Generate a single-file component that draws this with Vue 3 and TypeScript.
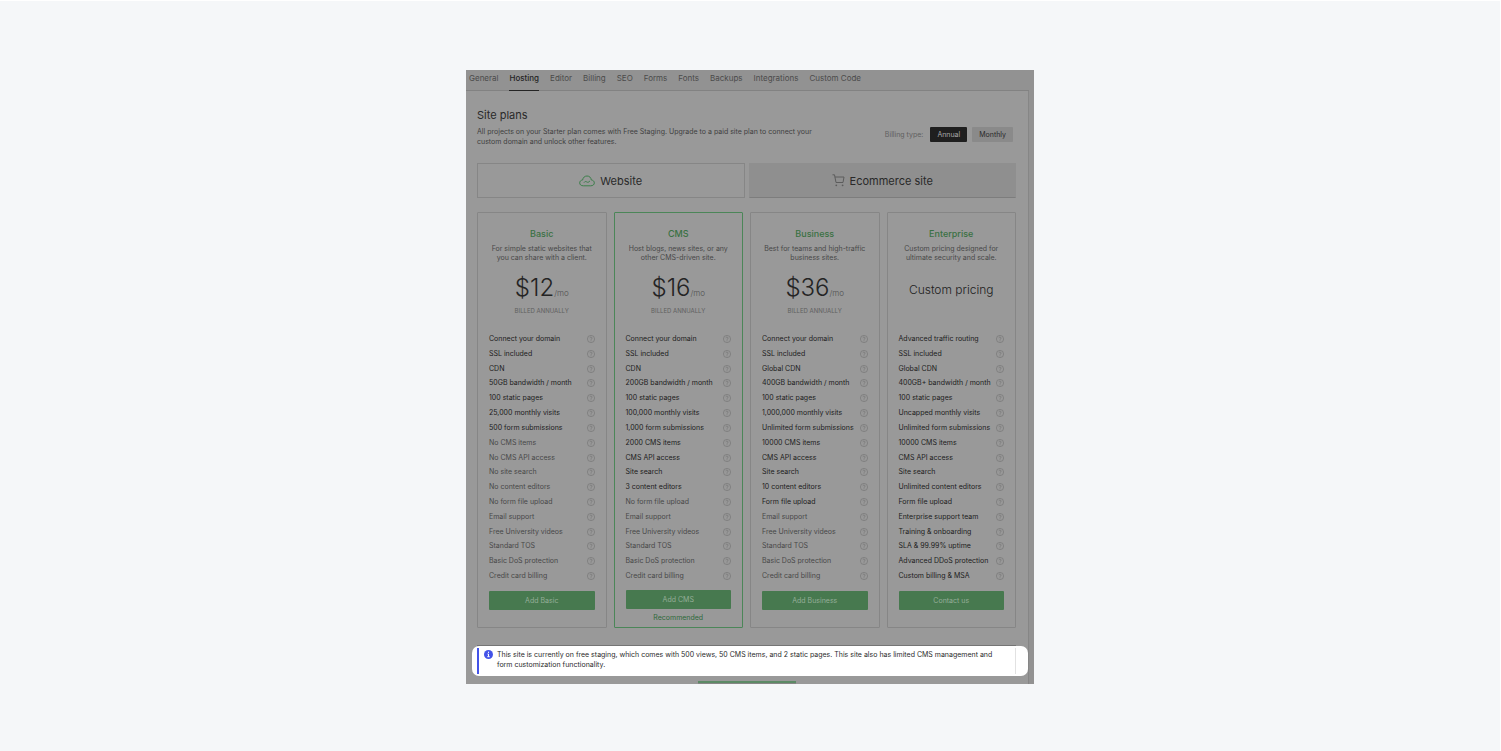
<script setup lang="ts">
import { ref } from 'vue'

interface Plan {
  name: string
  blurb: string[]
  price?: string
  features: string[]
  included: number
  action: string
  recommended?: boolean
}

const links = ['General', 'Hosting', 'Editor', 'Billing', 'SEO', 'Forms', 'Fonts', 'Backups', 'Integrations', 'Custom Code']
const billing = ref<'Annual' | 'Monthly'>('Annual')
const siteType = ref<'website' | 'ecommerce'>('website')

const standard = ['Email support', 'Free University videos', 'Standard TOS', 'Basic DoS protection', 'Credit card billing']

const plans: Plan[] = [
  {
    name: 'Basic',
    blurb: ['For simple static websites that', 'you can share with a client.'],
    price: '$12',
    features: ['Connect your domain', 'SSL included', 'CDN', '50GB bandwidth / month', '100 static pages', '25,000 monthly visits', '500 form submissions', 'No CMS items', 'No CMS API access', 'No site search', 'No content editors', 'No form file upload', ...standard],
    included: 7,
    action: 'Add Basic',
  },
  {
    name: 'CMS',
    blurb: ['Host blogs, news sites, or any', 'other CMS-driven site.'],
    price: '$16',
    features: ['Connect your domain', 'SSL included', 'CDN', '200GB bandwidth / month', '100 static pages', '100,000 monthly visits', '1,000 form submissions', '2000 CMS items', 'CMS API access', 'Site search', '3 content editors', 'No form file upload', ...standard],
    included: 11,
    action: 'Add CMS',
    recommended: true,
  },
  {
    name: 'Business',
    blurb: ['Best for teams and high-traffic', 'business sites.'],
    price: '$36',
    features: ['Connect your domain', 'SSL included', 'Global CDN', '400GB bandwidth / month', '100 static pages', '1,000,000 monthly visits', 'Unlimited form submissions', '10000 CMS items', 'CMS API access', 'Site search', '10 content editors', 'Form file upload', ...standard],
    included: 12,
    action: 'Add Business',
  },
  {
    name: 'Enterprise',
    blurb: ['Custom pricing designed for', 'ultimate security and scale.'],
    features: ['Advanced traffic routing', 'SSL included', 'Global CDN', '400GB+ bandwidth / month', '100 static pages', 'Uncapped monthly visits', 'Unlimited form submissions', '10000 CMS items', 'CMS API access', 'Site search', 'Unlimited content editors', 'Form file upload', 'Enterprise support team', 'Training & onboarding', 'SLA & 99.99% uptime', 'Advanced DDoS protection', 'Custom billing & MSA'],
    included: 17,
    action: 'Contact us',
  },
]
</script>

<template>
  <main class="frame">
    <nav class="nav">
      <a v-for="link in links" :key="link" href="#" :class="{ current: link === 'Hosting' }">{{ link }}</a>
    </nav>

    <div class="panel">
      <header class="intro">
        <div>
          <h1>Site plans</h1>
          <p>All projects on your Starter plan comes with Free Staging. Upgrade to a paid site plan to connect your<br>custom domain and unlock other features.</p>
        </div>
        <div class="billing" role="group" aria-labelledby="billing-label">
          <span id="billing-label">Billing type:</span>
          <button type="button" :class="{ on: billing === 'Annual' }" @click="billing = 'Annual'">Annual</button>
          <button type="button" :class="{ on: billing === 'Monthly' }" @click="billing = 'Monthly'">Monthly</button>
        </div>
      </header>

      <div class="tabs">
        <button type="button" :class="{ on: siteType === 'website' }" @click="siteType = 'website'">
          <svg class="cloud" width="16" height="12" viewBox="0 0 16 12" fill="none" stroke="currentColor" stroke-linecap="round" stroke-linejoin="round">
            <path d="M4 10.8C2 10.8.7 9.6.7 7.9.7 6.300 1.800 5.200 3.600 5 4 2.500 5.700 1 8 1c2.400 0 4 1.500 4.300 4 1.900.2 3 1.300 3 2.900 0 1.700-1.300 2.900-3.300 2.900Z" />
            <path d="M5.200 7.300c.7-1 1.600-1 2.500-.4.9.7 1.900.6 3-.7" />
          </svg>
          <span>Website</span>
        </button>
        <button type="button" :class="{ on: siteType === 'ecommerce' }" @click="siteType = 'ecommerce'">
          <svg width="13" height="13" viewBox="0 0 13 13" fill="none" stroke="currentColor">
            <path d="M.5.800H2.500L4 8.500H11L12 3H2.900" />
            <circle cx="4.300" cy="11.300" r=".9" fill="currentColor" stroke="none" />
            <circle cx="10.600" cy="11.300" r=".9" fill="currentColor" stroke="none" />
          </svg>
          <span>Ecommerce site</span>
        </button>
      </div>

      <div class="plans">
        <section v-for="plan in plans" :key="plan.name" class="plan" :class="{ recommended: plan.recommended }">
          <h2>{{ plan.name }}</h2>
          <p class="blurb">{{ plan.blurb[0] }}<br>{{ plan.blurb[1] }}</p>
          <div class="cost">
            <template v-if="plan.price">
              <p class="price">{{ plan.price }}<small>/mo</small></p>
              <p class="term">BILLED ANNUALLY</p>
            </template>
            <p v-else class="custom">Custom pricing</p>
          </div>
          <ul>
            <li v-for="(feature, i) in plan.features" :key="feature" :class="{ included: i < plan.included }">
              <span>{{ feature }}</span>
              <button type="button" class="help" :aria-label="'About ' + feature">
                <svg width="8" height="8" viewBox="0 0 8 8" fill="none" stroke="currentColor">
                  <circle cx="4" cy="4" r="3.600" stroke-width=".7" />
                  <path d="M2.900 3.200C2.900 1.700 5.100 1.800 5.100 3.100 5.100 3.900 4 3.900 4 4.800M4 5.400v.8" stroke-width=".8" />
                </svg>
              </button>
            </li>
          </ul>
          <button type="button" class="action">{{ plan.action }}</button>
          <p v-if="plan.recommended" class="tag">Recommended</p>
        </section>
      </div>

      <div class="rule"></div>
      <div class="notice">
        <div class="message">
          <svg width="9" height="9" viewBox="0 0 9 9">
            <circle cx="4.500" cy="4.500" r="4.500" fill="#4353e8" />
            <path d="M4.500 1.700v1.200M3.500 4h1v2.600M3.300 6.700h2.400" fill="none" stroke="#fff" />
          </svg>
          <p>This site is currently on free staging, which comes with 500 views, 50 CMS items, and 2 static pages. This site also has limited CMS management and<br>form customization functionality.</p>
        </div>
      </div>
      <div class="next"></div>
    </div>
  </main>
</template>

<style>
body {
  margin: 0;
  border: 0 solid #fff;
  border-width: 1px 1px 0 0;
  background: #f5f7f9;
}
</style>

<style scoped>
* {
  box-sizing: border-box;
}
h1, h2, p, ul {
  margin: 0;
  padding: 0;
  font-weight: 400;
}
button {
  margin: 0;
  padding: 0;
  border: 0;
  font: inherit;
  color: inherit;
  background: none;
  cursor: pointer;
}
.frame {
  max-width: 568px;
  margin: 69px auto 67px;
  background: #929292;
  color: #484848;
  font: 400 7px/10px Inter, "Liberation Sans", sans-serif;
  overflow: hidden;
}
.nav {
  display: flex;
  gap: 11px;
  height: 21px;
  margin-right: 5px;
  padding: 0 3px;
  border-bottom: 1px solid #828282;
}
.nav a {
  height: 21px;
  padding-top: 3px;
  color: #4b4b4b;
  font-size: 8px;
  text-decoration: none;
  white-space: nowrap;
}
.nav a.current {
  color: #242424;
  font-weight: 500;
  border-bottom: 1px solid #242424;
}
.panel {
  margin-right: 5px;
  padding: 17px 12px 0 11px;
  background: #999;
  border-right: 1px solid #868686;
}
.intro {
  display: flex;
  justify-content: space-between;
  align-items: flex-end;
}
h1 {
  color: #292929;
  font-size: 11px;
  line-height: 14px;
}
.intro p {
  margin-top: 5px;
  color: #404040;
}
.billing {
  display: flex;
  align-items: center;
  gap: 5px;
  margin: 0 3px 5px 0;
}
.billing span {
  margin-right: 2px;
  color: #606060;
}
.billing button {
  height: 15px;
  padding: 0 7px;
  border-radius: 1px;
  background: #8a8a8a;
  color: #292929;
}
.billing button.on {
  background: #1f1f1f;
  color: #aaa;
}
.tabs {
  display: grid;
  grid-template-columns: 1fr 1fr;
  gap: 4px;
  height: 35px;
  margin-top: 16px;
}
.tabs button {
  display: flex;
  align-items: center;
  justify-content: center;
  gap: 5px;
  background: #8f8f8f;
  border: 1px solid #8f8f8f;
  border-bottom-color: #7d7d7d;
  color: #292929;
  font-size: 11px;
}
.tabs button.on {
  background: #999;
  border-color: #868686;
}
.tabs svg {
  color: #5c5c5c;
}
.tabs .cloud {
  color: #3d7f4b;
}
.plans {
  display: grid;
  grid-template-columns: repeat(4, 1fr);
  gap: 7px;
  margin-top: 14px;
}
.plan {
  height: 416px;
  padding: 15px 11px 0;
  border: 1px solid #868686;
  border-radius: 1px;
  text-align: center;
}
.plan.recommended {
  border-color: #4b8658;
}
h2 {
  color: #397143;
  font-size: 9px;
  line-height: 12px;
  font-weight: 500;
}
.blurb {
  margin: 4px -6px 0;
  line-height: 9px;
}
.cost {
  height: 72px;
  padding-top: 13px;
}
.price {
  color: #242424;
  font-size: 24px;
  line-height: 26px;
  font-weight: 300;
}
.price small {
  color: #505050;
  font-size: 8px;
}
.term {
  color: #606060;
  font-size: 6px;
}
.custom {
  color: #202020;
  font-size: 12px;
  line-height: 30px;
  font-weight: 300;
}
ul {
  display: flex;
  flex-direction: column;
  justify-content: space-between;
  height: 247px;
  list-style: none;
}
li {
  display: flex;
  justify-content: space-between;
  align-items: center;
  height: 10px;
  white-space: nowrap;
}
li.included {
  color: #202020;
}
.help {
  display: flex;
  color: #777;
}
.action {
  width: 100%;
  height: 19px;
  margin-top: 10px;
  border-radius: 1px;
  background: #47794f;
  color: #95ae99;
}
.recommended .action {
  margin-top: 9px;
}
.tag {
  margin-top: 4px;
  color: #2f6a3a;
}
.rule {
  height: 1px;
  margin-top: 17px;
  background: #757575;
}
.notice {
  margin: 0 -12px 0 -5px;
  padding: 2px 12px 2px 5px;
  border-radius: 7px;
  background: #fff;
}
.message {
  display: flex;
  gap: 4px;
  height: 26px;
  padding-left: 5px;
  border-left: 2px solid #4353e8;
  border-right: 1px solid #e2e2e2;
}
.message svg {
  flex: none;
  margin-top: 2px;
}
.message p {
  flex: 1;
  margin-top: 2px;
  color: #2b2b2b;
  white-space: nowrap;
}
.next {
  width: 98px;
  height: 3px;
  margin: 5px auto 0;
  background: #5c8a66;
  border-bottom: 1px solid #868686;
}
</style>
